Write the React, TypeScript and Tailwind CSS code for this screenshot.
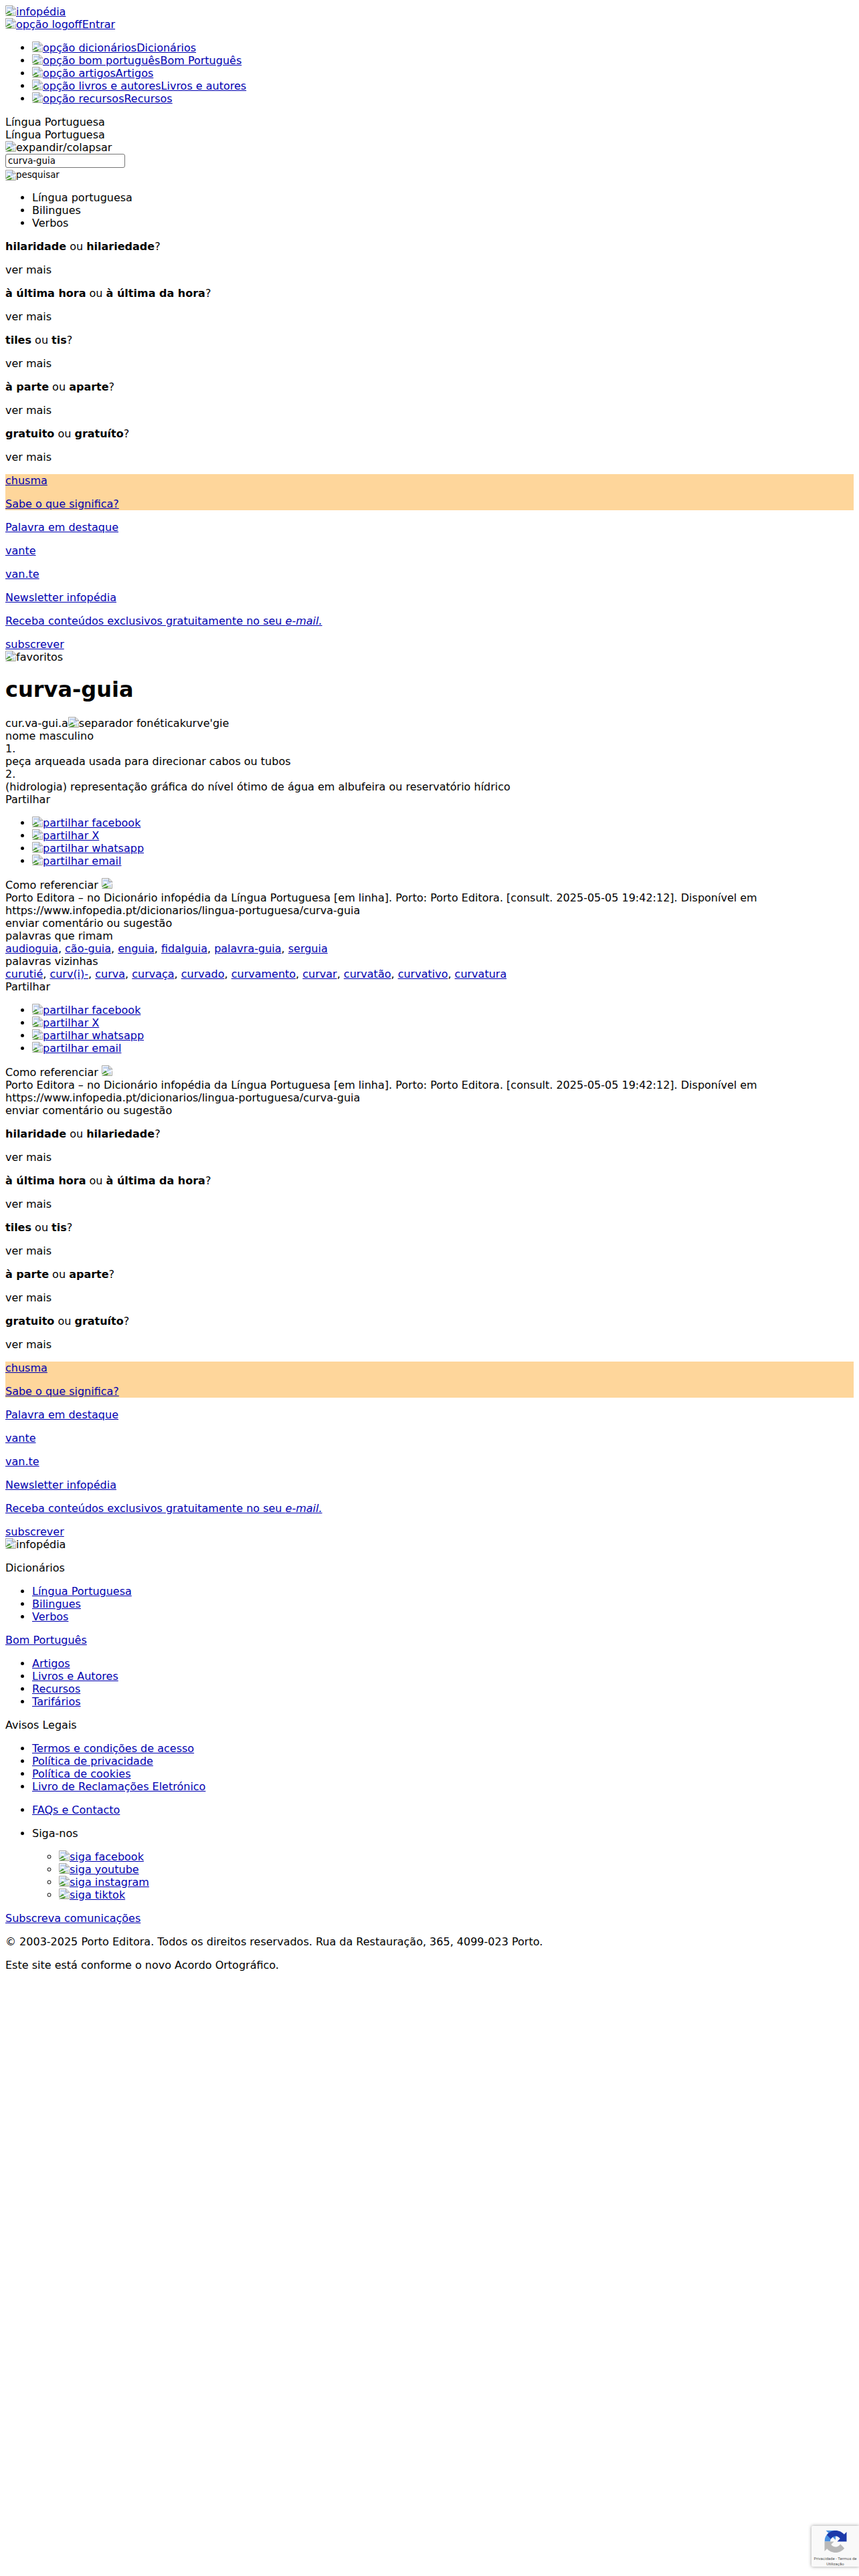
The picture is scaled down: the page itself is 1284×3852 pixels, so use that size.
import React from 'react';

const BrokenImg: React.FC<{ baseline?: boolean }> = ({ baseline }) => (
  <svg
    width="16"
    height="16"
    viewBox="0 0 16 16"
    className={baseline ? 'inline-block align-baseline shrink-0' : 'inline-block align-[-1px] shrink-0'}
  >
    <path d="M0.5 0.5H11L15.500 5V15.500H0.500Z" fill="#ffffff" stroke="#a6a6a6" />
    <path d="M2 2H10V6H14V14H2Z" fill="#c5d5f0" />
    <path d="M3 6.500C3 5 5 4.500 6 5.500C7.500 5 8.500 6 8 7.500H3.500Z" fill="#ffffff" />
    <path d="M1 15V12L6 8L12 15Z" fill="#4f9a35" />
    <path d="M8 15L11 11.500L15 15Z" fill="#d4e2bd" />
    <path d="M10.500 0.500V5.500H15.500" fill="#dcdcdc" stroke="#a6a6a6" />
    <path d="M0 14.500L16 7.500" stroke="#ffffff" strokeWidth="1.600" />
  </svg>
);

const Img: React.FC<{ alt?: string }> = ({ alt }) => (
  <>
    <BrokenImg />
    {alt}
  </>
);

const A: React.FC<{ children: React.ReactNode }> = ({ children }) => (
  <a href="#" className="text-[#0000b0] underline">{children}</a>
);

const confusions: [string, string][] = [
  ['hilaridade', 'hilariedade'],
  ['à última hora', 'à última da hora'],
  ['tiles', 'tis'],
  ['à parte', 'aparte'],
  ['gratuito', 'gratuíto'],
];

const ConfusionsAndPromo: React.FC = () => (
  <>
    {confusions.map(([a, b]) => (
      <div key={a}>
        <p className="my-4"><b>{a}</b> ou <b>{b}</b>?</p>
        <p className="my-4">ver mais</p>
      </div>
    ))}
    <div className="bg-[#fed69b] my-4">
      <p className="mb-4"><A>chusma</A></p>
      <p><A>Sabe o que significa?</A></p>
    </div>
    <p className="my-4"><A>Palavra em destaque</A></p>
    <p className="my-4"><A>vante</A></p>
    <p className="my-4"><A>van.te</A></p>
    <p className="my-4"><A>Newsletter infopédia</A></p>
    <p className="my-4"><A>Receba conteúdos exclusivos gratuitamente no seu <i>e-mail.</i></A></p>
    <div className="mt-4"><A>subscrever</A></div>
  </>
);

const ShareBlock: React.FC = () => (
  <>
    <div>Partilhar</div>
    <ul className="my-4 pl-10 list-disc">
      {['facebook', 'X', 'whatsapp', 'email'].map((s) => (
        <li key={s}><A><Img alt={`partilhar ${s}`} /></A></li>
      ))}
    </ul>
    <div>Como referenciar <BrokenImg baseline /></div>
    <div>Porto Editora – no Dicionário infopédia da Língua Portuguesa [em linha]. Porto: Porto Editora. [consult. 2025-05-05 19:42:12]. Disponível em https://www.infopedia.pt/dicionarios/lingua-portuguesa/curva-guia</div>
    <div>enviar comentário ou sugestão</div>
  </>
);

const LinkList: React.FC<{ items: string[] }> = ({ items }) => (
  <ul className="my-4 pl-10 list-disc">
    {items.map((t) => <li key={t}><A>{t}</A></li>)}
  </ul>
);

const Commaed: React.FC<{ items: string[] }> = ({ items }) => (
  <div>
    {items.map((t, i) => (
      <React.Fragment key={t}>
        <A>{t}</A>{i < items.length - 1 ? ', ' : ''}
      </React.Fragment>
    ))}
  </div>
);

const arrow = 'M64 32V4L56.800 11.200C50.900 4.400 42 0 32 0C21.600 0 12.400 5 6.500 12.700L18.300 24.600C19.500 22.400 21.100 20.600 23 19.200C25.100 17.600 28 16.300 32 16.300C32.500 16.300 32.900 16.400 33.200 16.500C38.200 16.900 42.500 19.600 45 23.600L36.700 32Z';

const RecaptchaLogo: React.FC = () => (
  <svg width="36" height="36" viewBox="0 0 64 64">
    <defs>
      <clipPath id="top-half"><rect x="0" y="0" width="64" height="32" /></clipPath>
    </defs>
    <g clipPath="url(#top-half)">
      <path d={arrow} fill="#4a90e2" transform="rotate(-90 32 32)" />
    </g>
    <path d={arrow} fill="#1c3aa9" />
    <path d={arrow} fill="#b8b8b8" transform="rotate(180 32 32)" />
  </svg>
);

export default function App() {
  return (
    <div className="relative h-[3852px] bg-white p-2 text-base leading-[19px] text-black font-['DejaVu_Sans',sans-serif]">
      {/* header */}
      <div><A><Img alt="infopédia" /></A></div>
      <div><A><Img alt="opção logoff" />Entrar</A></div>
      <ul className="my-4 pl-10 list-disc">
        <li><A><Img alt="opção dicionários" />Dicionários</A></li>
        <li><A><Img alt="opção bom português" />Bom Português</A></li>
        <li><A><Img alt="opção artigos" />Artigos</A></li>
        <li><A><Img alt="opção livros e autores" />Livros e autores</A></li>
        <li><A><Img alt="opção recursos" />Recursos</A></li>
      </ul>

      {/* search */}
      <div>Língua Portuguesa</div>
      <div>Língua Portuguesa</div>
      <div><Img alt="expandir/colapsar" /></div>
      <input
        readOnly
        value="curva-guia"
        className="block h-[21px] w-[179px] rounded-[3px] border border-[#767676] px-[3px] text-[13.33px] leading-[15px] text-black"
      />
      <div className="mt-[3px] flex h-4 items-center text-[13.33px] leading-[16px]">
        <BrokenImg />
        <span>pesquisar</span>
      </div>
      <ul className="my-4 pl-10 list-disc">
        <li>Língua portuguesa</li>
        <li>Bilingues</li>
        <li>Verbos</li>
      </ul>

      <ConfusionsAndPromo />

      {/* entry */}
      <div><Img alt="favoritos" /></div>
      <h1 className="my-[21.44px] text-[32px] leading-[37px] font-bold">curva-guia</h1>
      <div>cur.va-gui.a<BrokenImg />separador fonéticakurve'gie</div>
      <div>nome masculino</div>
      <div>1.</div>
      <div>peça arqueada usada para direcionar cabos ou tubos</div>
      <div>2.</div>
      <div>(hidrologia) representação gráfica do nível ótimo de água em albufeira ou reservatório hídrico</div>
      <ShareBlock />
      <div>palavras que rimam</div>
      <Commaed items={['audioguia', 'cão-guia', 'enguia', 'fidalguia', 'palavra-guia', 'serguia']} />
      <div>palavras vizinhas</div>
      <Commaed items={['curutié', 'curv(i)-', 'curva', 'curvaça', 'curvado', 'curvamento', 'curvar', 'curvatão', 'curvativo', 'curvatura']} />
      <ShareBlock />

      <ConfusionsAndPromo />

      {/* footer */}
      <div><Img alt="infopédia" /></div>
      <p className="my-4">Dicionários</p>
      <LinkList items={['Língua Portuguesa', 'Bilingues', 'Verbos']} />
      <p className="my-4"><A>Bom Português</A></p>
      <LinkList items={['Artigos', 'Livros e Autores', 'Recursos', 'Tarifários']} />
      <p className="my-4">Avisos Legais</p>
      <LinkList items={['Termos e condições de acesso', 'Política de privacidade', 'Política de cookies', 'Livro de Reclamações Eletrónico']} />
      <LinkList items={['FAQs e Contacto']} />
      <ul className="my-4 pl-10 list-disc">
        <li>
          Siga-nos
          <ul className="my-4 pl-10 list-[circle]">
            {['facebook', 'youtube', 'instagram', 'tiktok'].map((s) => (
              <li key={s}><A><Img alt={`siga ${s}`} /></A></li>
            ))}
          </ul>
        </li>
      </ul>
      <p className="my-4"><A>Subscreva comunicações</A></p>
      <p className="my-4">© 2003-2025 Porto Editora. Todos os direitos reservados. Rua da Restauração, 365, 4099-023 Porto.</p>
      <p className="my-4">Este site está conforme o novo Acordo Ortográfico.</p>

      {/* reCAPTCHA badge */}
      <div className="absolute bottom-[14px] right-0 flex h-[61px] w-[71px] flex-col items-center rounded-l-[2px] bg-[#f9f9f9] pt-[7px] shadow-[0_0_5px_rgba(128,128,128,0.8)]">
        <RecaptchaLogo />
        <div className="mt-[5px] w-[71px] text-center text-[6px] leading-[8px] text-[#555555] font-['Roboto',sans-serif]">
          Privacidade - Termos de
          <br />
          Utilização
        </div>
      </div>
    </div>
  );
}
